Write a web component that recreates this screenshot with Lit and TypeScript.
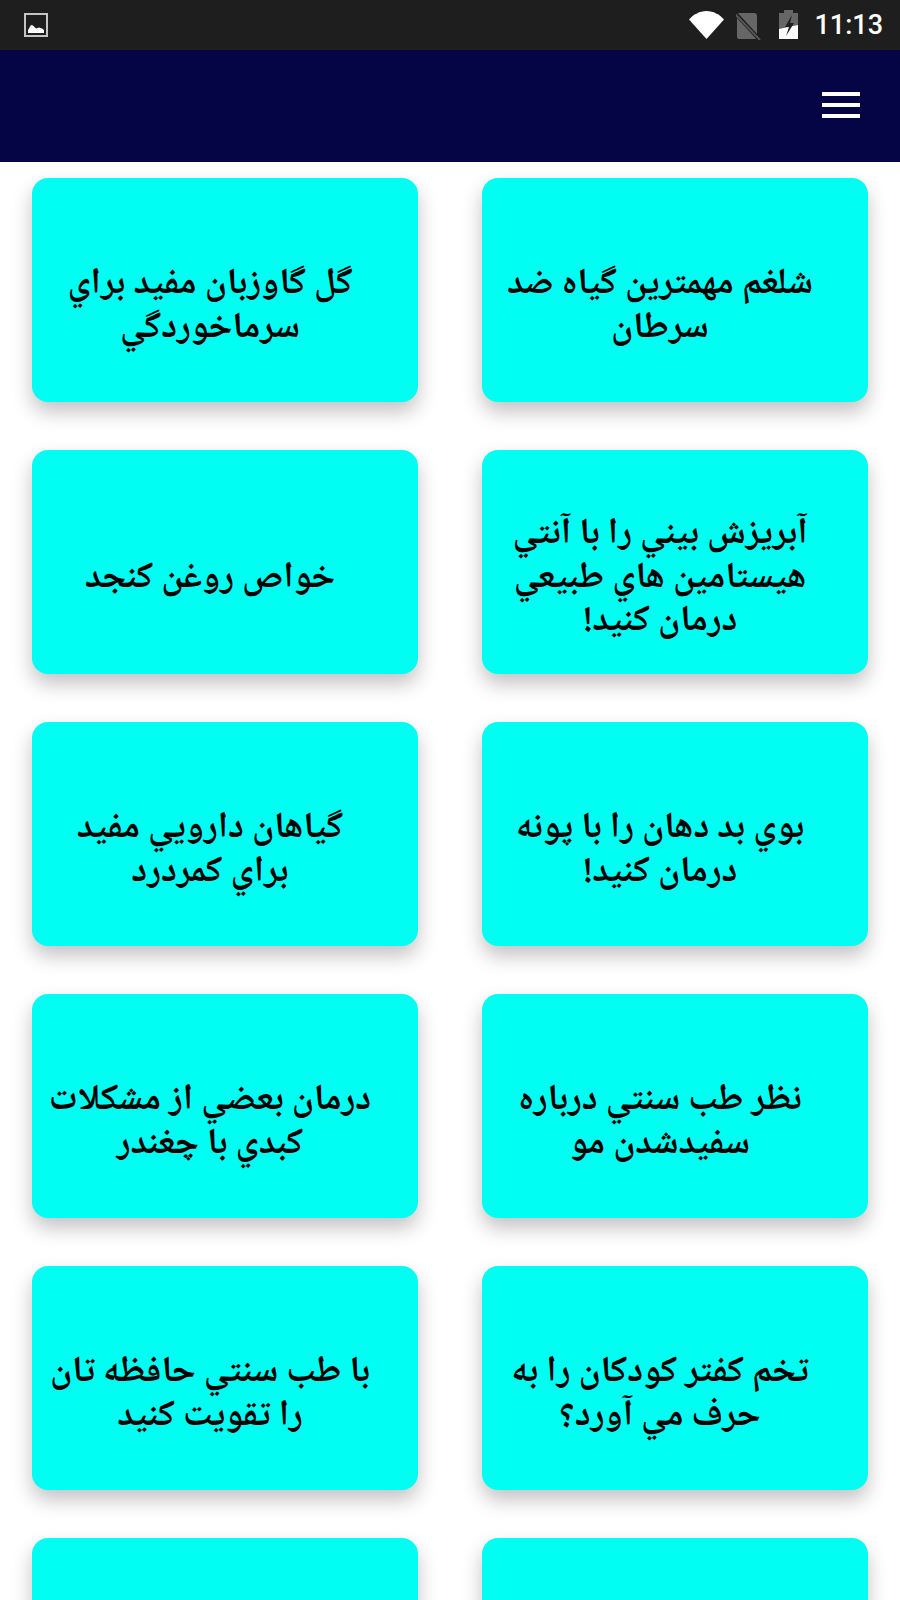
import { LitElement, html, css, svg } from "lit";
import { customElement } from "lit/decorators.js";

const ITEMS = [
  "شلغم مهمترين گياه ضد سرطان",
  "گل گاوزبان مفيد براي سرماخوردگي",
  "آبريزش بيني را با آنتي هيستامين هاي طبيعي درمان كنيد!",
  "خواص روغن كنجد",
  "بوي بد دهان را با پونه درمان كنيد!",
  "گياهان دارويي مفيد براي كمردرد",
  "نظر طب سنتي درباره سفيدشدن مو",
  "درمان بعضي از مشكلات كبدي با چغندر",
  "تخم كفتر كودكان را به حرف مي آورد؟",
  "با طب سنتي حافظه تان را تقويت كنيد",
  "",
  "",
];

@customElement("app-root")
export class AppRoot extends LitElement {
  static styles = css`
    :host {
      display: block;
      width: 900px;
      height: 1600px;
      overflow: hidden;
      background: #fff;
      font-family: "Noto Naskh Arabic", "DejaVu Sans", serif;
    }
    .status {
      height: 50px;
      background: #1e1e1e;
      display: flex;
      align-items: center;
      padding: 0 17px 0 24px;
    }
    .status .spacer { flex: 1; }
    .status svg { display: block; }
    .wifi { margin-right: 12px; }
    .sim { margin-right: 18px; margin-top: 2px; }
    .battery { margin-right: 16px; margin-top: -1px; }
    .time {
      color: #fff;
      font-family: Roboto, sans-serif;
      font-size: 27px;
      font-weight: 500;
      line-height: 50px;
    }
    .bar {
      height: 112px;
      background: #050545;
      display: flex;
      align-items: center;
      justify-content: flex-end;
      padding-right: 40px;
    }
    .menu {
      width: 38px;
      height: 26px;
      display: flex;
      flex-direction: column;
      justify-content: space-between;
      margin-top: -2px;
    }
    .menu span { display: block; height: 4px; background: #fff; }
    .grid {
      display: grid;
      grid-template-columns: 386px 386px;
      column-gap: 64px;
      row-gap: 48px;
      padding: 16px 32px;
      direction: rtl;
    }
    .card {
      height: 224px;
      box-sizing: border-box;
      background: #00fff2;
      border-radius: 16px;
      box-shadow: 0 10px 20px rgba(0, 0, 0, 0.24);
      padding: 35px 46px 0 16px;
      display: flex;
      align-items: center;
      justify-content: center;
      text-align: center;
      color: #000;
      font-size: 36.5px;
      font-weight: 700;
      line-height: 43.5px;
    }
  `;

  render() {
    return html`
      <div class="status">
        <svg width="24" height="24" viewBox="0 0 24 24">
          ${svg`<rect x="1" y="1" width="22" height="22" fill="none" stroke="#c4c4c4" stroke-width="2"></rect>
          <path d="M4 20v-3l3-5 2 .5 3 3 3-1 3 1 2 1.500V20z" fill="#fff"></path>`}
        </svg>
        <div class="spacer"></div>
        <svg class="wifi" width="35" height="28" viewBox="0 0 35 28">
          <path d="M0 8.500C4.500 3.500 10.500 0 17.500 0S30.500 3.500 35 8.500L17.500 28z" fill="#fff"></path>
        </svg>
        <svg class="sim" width="25" height="27" viewBox="0 0 25 27">
          ${svg`<path d="M1 2a2 2 0 0 1 2-2h15a3 3 0 0 1 3 3v21a2 2 0 0 1-2 2H3a2 2 0 0 1-2-2z" fill="#666"></path>
          <path d="M-1 0l25 27" stroke="#1e1e1e" stroke-width="4"></path>
          <path d="M-1 1l25 26" stroke="#555" stroke-width="2"></path>`}
        </svg>
        <svg class="battery" width="19" height="29" viewBox="0 0 19 29">
          ${svg`<path d="M5 0h9v3h5v26H0V3h5z" fill="#666"></path>
          <path d="M0 19l19-4v14H0z" fill="#fff"></path>
          <path d="M13 5L6 17h4l-3 9 8-13h-4z" fill="#1e1e1e"></path>`}
        </svg>
        <span class="time">11:13</span>
      </div>
      <div class="bar">
        <div class="menu"><span></span><span></span><span></span></div>
      </div>
      <div class="grid">
        ${ITEMS.map((t) => html`<div class="card"><span>${t}</span></div>`)}
      </div>
    `;
  }
}
